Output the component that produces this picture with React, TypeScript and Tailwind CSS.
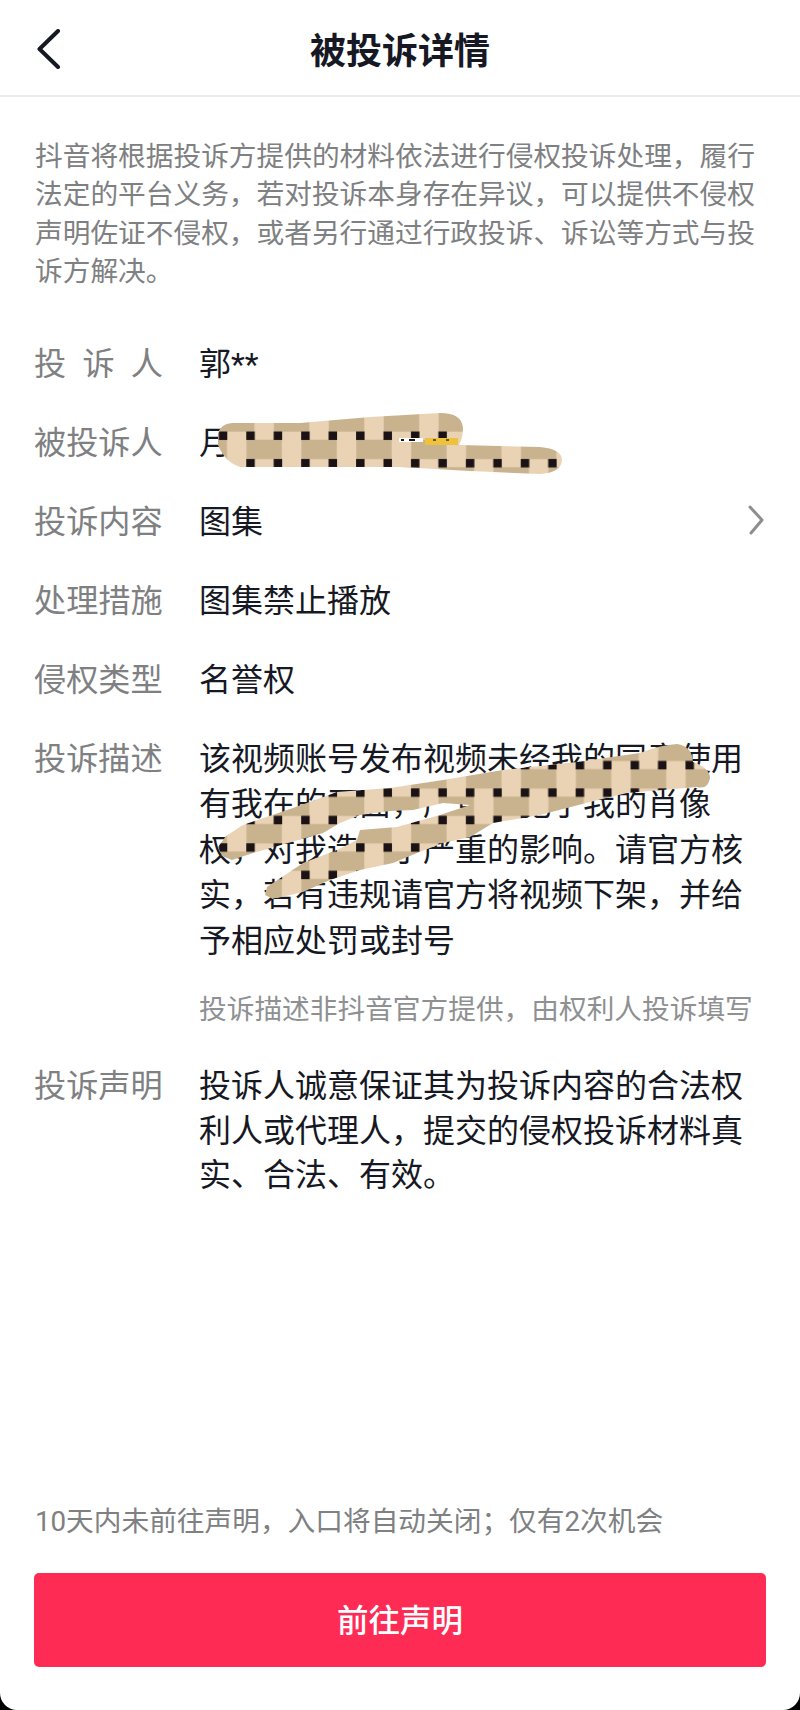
import React from "react";

const font = "font-['Roboto','Noto_Sans_CJK_SC',sans-serif]";

function Row({ label, children, spaced }: { label: string; children: React.ReactNode; spaced?: boolean }) {
  return (
    <div className="flex items-start pr-[36px]">
      <div className="w-[165px] shrink-0 whitespace-nowrap text-[32.2px] leading-[45px] text-[#7e8082]">
        {spaced ? (
          <div className="flex w-[129px] justify-between">
            {label.split("").map((c) => (
              <span key={c}>{c}</span>
            ))}
          </div>
        ) : (
          label
        )}
      </div>
      {children}
    </div>
  );
}

export default function App() {
  return (
    <div className={`h-[1710px] w-[800px] bg-black ${font}`}>
      <div className="relative flex h-full w-full flex-col overflow-hidden rounded-b-[17px] bg-white">
        <header className="grid h-[97px] shrink-0 grid-cols-[1fr_auto_1fr] items-center border-b-2 border-[#ececec]">
          <div className="pl-[37px]">
            <svg width="24" height="40" viewBox="0 0 24 40" fill="none" className="mt-[2px]">
              <path d="M21 2 L2.5 20 L21 38" stroke="#161823" strokeWidth="4" strokeLinecap="round" strokeLinejoin="round" />
            </svg>
          </div>
          <h1 className="pt-[8px] text-[36px] font-bold leading-[48px] text-[#161823]">被投诉详情</h1>
          <div />
        </header>

        <p className="whitespace-nowrap pl-[35px] pt-[41px] text-[27.7px] leading-[38.4px] text-[#7e8082]">
          抖音将根据投诉方提供的材料依法进行侵权投诉处理&#65292;履行<br />
          法定的平台义务&#65292;若对投诉本身存在异议&#65292;可以提供不侵权<br />
          声明佐证不侵权&#65292;或者另行通过行政投诉、诉讼等方式与投<br />
          诉方解决。
        </p>

        <div className="mt-[50px] flex flex-col gap-[34px] pl-[34px] text-[32px] leading-[45px] text-[#161823]">
          <Row label="投诉人" spaced>
            <span>郭**</span>
          </Row>
          <Row label="被投诉人">
            <span>月</span>
          </Row>
          <Row label="投诉内容">
            <span className="flex-1">图集</span>
            <svg width="16" height="30" viewBox="0 0 16 30" fill="none" className="mt-[5px]">
              <path d="M2 2 L14 15 L3 28" stroke="#8c8e90" strokeWidth="3" strokeLinecap="round" strokeLinejoin="round" />
            </svg>
          </Row>
          <Row label="处理措施">
            <span>图集禁止播放</span>
          </Row>
          <Row label="侵权类型">
            <span>名誉权</span>
          </Row>
          <Row label="投诉描述">
            <div className="flex-1 whitespace-nowrap">
              <p className="leading-[45.5px]">
                该视频账号发布视频未经我的同意使用<br />
                有我在的画面&#65292;严重侵犯了我的肖像<br />
                权&#65292;对我造成了严重的影响。请官方核<br />
                实&#65292;若有违规请官方将视频下架&#65292;并给<br />
                予相应处罚或封号
              </p>
              <p className="mt-[26px] text-[27.7px] leading-[40px] text-[#8e9092]">
                投诉描述非抖音官方提供&#65292;由权利人投诉填写
              </p>
            </div>
          </Row>
          <Row label="投诉声明">
            <p className="flex-1 whitespace-nowrap leading-[44.5px]">
              投诉人诚意保证其为投诉内容的合法权<br />
              利人或代理人&#65292;提交的侵权投诉材料真<br />
              实、合法、有效。
            </p>
          </Row>
        </div>

        <div className="mt-auto px-[34px] pb-[43px]">
          <p className="pl-[1px] text-[27.7px] leading-[40px] text-[#7e8082]">10天内未前往声明&#65292;入口将自动关闭&#65307;仅有2次机会</p>
          <button className="mt-[31px] flex h-[94px] w-full items-center justify-center rounded-[5px] bg-[#fe2c55] pt-[3px] text-[31.5px] font-medium text-white">
            前往声明
          </button>
        </div>

        {/* hand-drawn redaction scribbles lying over the text */}
        <svg className="pointer-events-none absolute inset-0" width="800" height="1710" viewBox="0 0 800 1710" fill="none">
          <defs>
            <pattern id="mosaic" patternUnits="userSpaceOnUse" x="209.275" y="421.975" width="54.9" height="54.9">
              <rect width="54.9" height="54.9" fill="#ead3b5" />
              <rect x="0" y="17.7" width="17.7" height="19.5" fill="#c9b38f" />
              <rect x="37.2" y="17.7" width="17.7" height="19.5" fill="#c9b38f" />
              <rect x="9.7" y="0" width="35.5" height="9.7" fill="#c9b38f" />
              <rect x="9.7" y="45.2" width="35.5" height="9.7" fill="#c9b38f" />
              <rect x="9.5" y="9.5" width="8.5" height="8.5" fill="#1a1214" />
              <rect x="37" y="9.5" width="8.5" height="8.5" fill="#1a1214" />
              <rect x="9.5" y="37" width="8.5" height="8.5" fill="#1a1214" />
              <rect x="37" y="37" width="8.5" height="8.5" fill="#1a1214" />
            </pattern>
          </defs>
          <path
            d="M218 434 Q220 424 232 423 L300 423 L370 417 L440 413 Q462 413 463 428 Q463 438 459 445 L540 447 Q562 449 562 460 Q561 473 540 474 L470 471 L400 467 L240 467 Q225 462 218 445 Z"
            fill="url(#mosaic)"
          />
          <rect x="399" y="438" width="24" height="4" fill="#ffffff" />
          <rect x="401" y="439" width="3" height="2" fill="#1a1214" />
          <rect x="409" y="439" width="6" height="2" fill="#1a1214" />
          <rect x="425" y="438" width="33" height="7" fill="#eec23a" />
          <rect x="433" y="439" width="3" height="2" fill="#6b5a20" />
          <rect x="446" y="439" width="3" height="2" fill="#6b5a20" />
          <path
            d="M218 847 L226 836 L243 825 L293 808 L337 792 L390 788 L443 780 L503 770 L577 762 L640 753 Q660 745 677 744 Q692 746 693 762 Q710 768 710 778 Q708 790 697 787 L627 793 L590 802 L540 815 L493 823 L470 837 L443 843 L417 853 L393 863 L360 870 L330 880 L303 892 L273 899 L265 895 L267 887 L303 863 L337 850 L357 840 L360 830 L397 827 L440 815 L470 805 L443 803 L413 810 L390 811 L360 815 L340 823 L323 833 L253 853 L232 860 L222 856 Z"
            fill="url(#mosaic)"
          />
        </svg>
      </div>
    </div>
  );
}
